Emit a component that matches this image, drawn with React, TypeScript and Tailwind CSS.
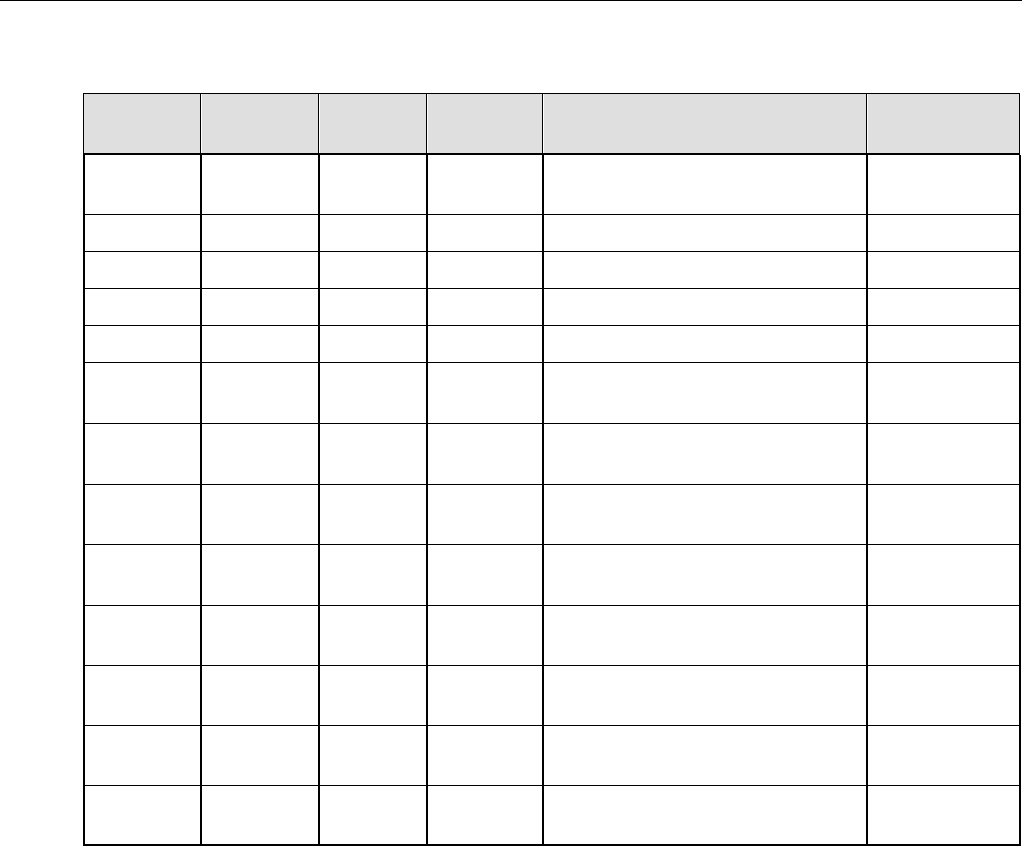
import React from "react";

const bodyWidths = ["w-[117px]", "w-[118px]", "w-[108px]", "w-[116px]", "w-[324px]"];
const rowHeights = [
  "h-[60px]",
  "h-[37px]",
  "h-[37px]",
  "h-[37px]",
  "h-[37px]",
  "h-[61px]",
  "h-[61px]",
  "h-[60px]",
  "h-[61px]",
  "h-[60px]",
  "h-[60px]",
  "h-[60px]",
  "h-[60px]",
];

function HeaderRow() {
  return (
    <div className="flex h-[62px]">
      <div className="w-[117px] border-t border-b-2 border-l border-black bg-[#dfdfdf]" />
      <div className="w-[118px] border-t border-b-2 border-l border-black bg-[#dfdfdf] shadow-[inset_1px_0_0_#ffffff]" />
      <div className="w-[108px] border-t border-b-2 border-l border-black bg-[#dfdfdf] shadow-[inset_1px_0_0_#ffffff]" />
      <div className="w-[116px] border-t border-b-2 border-l border-black bg-[#dfdfdf] shadow-[inset_1px_0_0_#ffffff]" />
      <div className="w-[324px] border-t border-b-2 border-l border-black bg-[#dfdfdf] shadow-[inset_1px_0_0_#ffffff]" />
      <div className="w-[154px] border-t border-b-2 border-l border-r border-black bg-[#dfdfdf] shadow-[inset_1px_0_0_#ffffff]" />
    </div>
  );
}

function BodyRow({ h, last }: { h: string; last: boolean }) {
  const b = last ? "border-b-2" : "border-b";
  return (
    <div className={`flex ${h}`}>
      {bodyWidths.map((w, i) => (
        <div key={i} className={`${w} ${b} border-l-2 border-black bg-white`} />
      ))}
      <div className={`w-[155px] ${b} border-l-2 border-r-2 border-black bg-white`} />
    </div>
  );
}

export default function App() {
  return (
    <div
      className="w-[1031px] h-[847px] bg-white overflow-hidden"
      style={{ fontFamily: '"Liberation Sans", Arial, sans-serif' }}
    >
      <div className="h-px w-[1022px] bg-black" />
      <div className="ml-[83px] mt-[92px] flex flex-col">
        <HeaderRow />
        {rowHeights.map((h, i) => (
          <BodyRow key={i} h={h} last={i === rowHeights.length - 1} />
        ))}
      </div>
    </div>
  );
}
